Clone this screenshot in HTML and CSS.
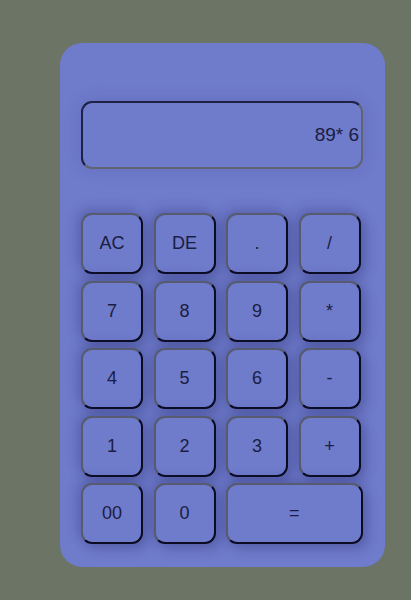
FILE: index.html
```html
<!DOCTYPE html>
<html>
<head>
<meta charset="utf-8">
<link rel="stylesheet" href="styles.css">
</head>
<body>
<div class="calc">
  <div class="display">89* 6</div>
  <div class="keys">
    <div class="key">AC</div>
    <div class="key">DE</div>
    <div class="key">.</div>
    <div class="key">/</div>
    <div class="key">7</div>
    <div class="key">8</div>
    <div class="key">9</div>
    <div class="key">*</div>
    <div class="key">4</div>
    <div class="key">5</div>
    <div class="key">6</div>
    <div class="key">-</div>
    <div class="key">1</div>
    <div class="key">2</div>
    <div class="key">3</div>
    <div class="key">+</div>
    <div class="key">00</div>
    <div class="key">0</div>
    <div class="key wide">=</div>
  </div>
</div>
</body>
</html>
```
FILE: styles.css
```css
html, body {
  margin: 0;
  padding: 0;
  background: #6b7465;
  height: 600px;
  overflow: hidden;
}
body {
  font-family: "Liberation Sans", Arial, sans-serif;
  padding-top: 43px;
  padding-left: 60px;
  box-sizing: border-box;
}
.calc {
  width: 325px;
  height: 524px;
  box-sizing: border-box;
  background: #6f7bcb;
  border-radius: 22px;
  padding: 58px 22px 0 21px;
}
.display {
  height: 68px;
  box-sizing: border-box;
  border: 2px solid #1e2146;
  border-right-color: #5f6470;
  border-bottom-color: #5f6470;
  border-radius: 11px;
  display: flex;
  align-items: center;
  justify-content: flex-end;
  padding-right: 2px;
  font-size: 19px;
  color: #1b1d42;
  box-shadow: 0 0 18px rgba(40, 45, 110, 0.15);
}
.keys {
  margin-top: 44px;
  display: grid;
  grid-template-columns: 62px 62px 62px 62px;
  grid-auto-rows: 61px;
  column-gap: 10.5px;
  row-gap: 6.5px;
}
.key {
  box-sizing: border-box;
  border: 2px solid #565b6e;
  border-right-color: #0b0c22;
  border-bottom-color: #0b0c22;
  border-radius: 11px;
  background: #6f7bcb;
  display: flex;
  align-items: center;
  justify-content: center;
  font-size: 18px;
  color: #1b1d42;
  box-shadow: -4px -4px 12px rgba(40, 45, 110, 0.25), 5px 5px 12px rgba(40, 45, 110, 0.3);
}
.wide {
  grid-column: span 2;
  margin-right: -2px;
}
```
